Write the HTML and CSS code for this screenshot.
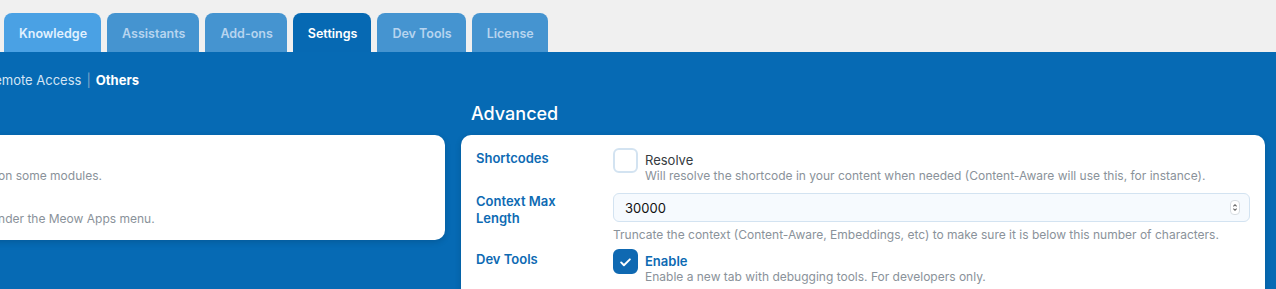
FILE: index.html
```html
<!DOCTYPE html>
<html lang="en">

<head>
    <meta charset="UTF-8">
    <meta name="viewport" content="width=device-width, initial-scale=1.0">
    <title>AI Engine - Settings</title>
    <link rel="stylesheet" href="styles.css">
</head>

<body>
    <div class="tabs">
        <div class="tab tab-hover">Knowledge</div>
        <div class="tab">Assistants</div>
        <div class="tab">Add-ons</div>
        <div class="tab active">Settings</div>
        <div class="tab">Dev Tools</div>
        <div class="tab">License</div>
    </div>
    <div class="panel">
        <div class="subnav">
            <span class="subnav-item">Remote Access</span>
            <span class="subnav-sep">|</span>
            <span class="subnav-item active">Others</span>
        </div>
        <div class="columns">
            <!-- 左列 -->
            <div class="column">
                <h2 class="column-title">Modules</h2>
                <div class="card card-short">
                    <div class="row">
                        <div class="row-label">Statistics</div>
                        <div class="row-field">
                            <div class="check-line">
                                <span class="checkbox checked">
                                    <svg viewBox="0 0 24 24"><path d="M7 12.5l3.2 3.2L17 9" /></svg>
                                </span>
                                <div class="check-text">
                                    <div class="check-title on">Enable</div>
                                    <div class="desc">Track all usage of AI, required on some modules.</div>
                                </div>
                            </div>
                        </div>
                    </div>
                    <div class="row">
                        <div class="row-label">Settings Menu</div>
                        <div class="row-field">
                            <div class="check-line">
                                <span class="checkbox"></span>
                                <div class="check-text">
                                    <div class="check-title">Display</div>
                                    <div class="desc">The settings will be available under the Meow Apps menu.</div>
                                </div>
                            </div>
                        </div>
                    </div>
                </div>
            </div>
            <!-- 右列 -->
            <div class="column">
                <h2 class="column-title">Advanced</h2>
                <div class="card card-long">
                    <div class="row">
                        <div class="row-label">Shortcodes</div>
                        <div class="row-field">
                            <div class="check-line">
                                <span class="checkbox"></span>
                                <div class="check-text">
                                    <div class="check-title">Resolve</div>
                                    <div class="desc">Will resolve the shortcode in your content when needed (Content-Aware will use this, for instance).</div>
                                </div>
                            </div>
                        </div>
                    </div>
                    <div class="row row-input">
                        <div class="row-label">Context Max Length</div>
                        <div class="row-field">
                            <div class="number-input">
                                <input type="text" value="30000">
                                <span class="spinner">
                                    <svg viewBox="0 0 10 16"><path d="M3 6.5l2-2 2 2M3 9.5l2 2 2-2" /></svg>
                                </span>
                            </div>
                            <div class="desc desc-under">Truncate the context (Content-Aware, Embeddings, etc) to make sure it is below this number of characters.</div>
                        </div>
                    </div>
                    <div class="row">
                        <div class="row-label">Dev Tools</div>
                        <div class="row-field">
                            <div class="check-line">
                                <span class="checkbox checked">
                                    <svg viewBox="0 0 24 24"><path d="M7 12.5l3.2 3.2L17 9" /></svg>
                                </span>
                                <div class="check-text">
                                    <div class="check-title on">Enable</div>
                                    <div class="desc">Enable a new tab with debugging tools. For developers only.</div>
                                </div>
                            </div>
                        </div>
                    </div>
                    <div class="row">
                        <div class="row-label">Debug Mode</div>
                        <div class="row-field">
                            <div class="check-line">
                                <span class="checkbox"></span>
                                <div class="check-text">
                                    <div class="check-title">Enable</div>
                                    <div class="desc">Display additional information in the console.</div>
                                </div>
                            </div>
                        </div>
                    </div>
                </div>
            </div>
        </div>
    </div>
</body>

</html>
```

FILE: styles.css
```css
* {
    margin: 0;
    padding: 0;
    box-sizing: border-box;
}

body {
    background-color: #f0f0f0;
    font-family: Inter, "Noto Sans", sans-serif;
    overflow: hidden;
}

/* 顶部标签 */
.tabs {
    display: flex;
    gap: 6px;
    padding: 13px 0 0 4px;
}

.tabs .tab {
    height: 39px;
    line-height: 41px;
    padding: 0 14px 0 15px;
    border-radius: 8px 8px 0 0;
    background-color: #4594d0;
    color: #b7d4ef;
    font-size: 12.5px;
    font-weight: 600;
    white-space: nowrap;
}

.tabs .tab.tab-hover {
    background-color: #4aa1e4;
    color: #e2f1ff;
}

.tabs .tab.active {
    background-color: #0669b3;
    color: #fff;
}

/* 蓝色面板 */
.panel {
    background-color: #066ab4;
    height: 237px;
    overflow: hidden;
}

.subnav {
    display: flex;
    align-items: center;
    gap: 5px;
    margin: 20px 0 0 -14px;
    height: 16px;
    font-size: 13px;
    line-height: 16px;
    color: #d3e5f5;
}

.subnav .subnav-sep {
    color: #7fa7cb;
}

.subnav .subnav-item.active {
    color: #fff;
    font-weight: 700;
}

.columns {
    display: grid;
    grid-template-columns: 804px 804px;
    gap: 16px;
    margin: 14px 0 0 -359px;
}

.column-title {
    height: 24px;
    line-height: 24px;
    margin: 0 0 9px 10px;
    font-size: 18px;
    font-weight: 500;
    color: #fff;
}

.card {
    background-color: #fff;
    border-radius: 10px;
    padding: 13px 15px;
    box-shadow: 0 2px 6px rgba(0, 0, 0, 0.15);
    display: flex;
    flex-direction: column;
    gap: 7px;
}

.card.card-long {
    gap: 9px;
}

.card .row-input {
    margin-bottom: -3px;
}

.row {
    display: grid;
    grid-template-columns: 110px 1fr;
    gap: 27px;
}

.row-label {
    padding-top: 2px;
    font-size: 13px;
    line-height: 17px;
    font-weight: 600;
    color: #0d6ab3;
}

.row-input .row-label {
    padding-top: 0;
}

.check-line {
    display: flex;
    gap: 7px;
}

.checkbox {
    flex: none;
    width: 25px;
    height: 25px;
    border: 2px solid #d3e3f1;
    border-radius: 6px;
    background-color: #fff;
    display: flex;
    align-items: center;
    justify-content: center;
}

.checkbox.checked {
    background-color: #0f69b2;
    border-color: #0f69b2;
}

.checkbox svg {
    width: 22px;
    height: 22px;
    fill: none;
    stroke: #fff;
    stroke-width: 2.2;
    stroke-linecap: round;
    stroke-linejoin: round;
}

.check-text {
    padding-top: 4px;
}

.check-title {
    font-size: 13px;
    line-height: 16px;
    color: #353b41;
}

.check-title.on {
    color: #0d6ab3;
    font-weight: 600;
}

.desc {
    font-size: 12px;
    line-height: 16px;
    color: #8a929a;
    white-space: nowrap;
}

.desc.desc-under {
    margin-top: 5px;
}

.number-input {
    position: relative;
    height: 29px;
}

.number-input input {
    width: 100%;
    height: 29px;
    border: 1px solid #d3e3f1;
    border-radius: 6px;
    background-color: #f6fafe;
    padding: 0 11px;
    font-family: Inter, "Noto Sans", sans-serif;
    font-size: 13px;
    color: #111;
    outline: none;
}

.number-input .spinner {
    position: absolute;
    right: 10px;
    top: 7px;
    width: 10px;
    height: 15px;
    border: 1px solid #d8dde2;
    border-radius: 4px;
    background-color: #fff;
}

.number-input .spinner svg {
    display: block;
    width: 8px;
    height: 13px;
    fill: none;
    stroke: #555;
    stroke-width: 1.3;
}
```
